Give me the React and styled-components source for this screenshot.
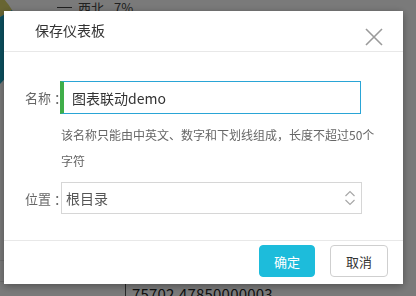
import React from 'react'
import styled, { createGlobalStyle } from 'styled-components'

const Global = createGlobalStyle`
  html, body {
    margin: 0;
    padding: 0;
    background: #fff;
    font-family: "Noto Sans CJK SC", "Noto Sans", sans-serif;
  }
  #root {
    width: 416px;
    height: 296px;
    overflow: hidden;
  }
`

const Dashboard = styled.div`
  position: relative;
  width: 416px;
  height: 296px;
  display: flex;
  flex-direction: column;
  justify-content: space-between;
  overflow: hidden;
`

const Pie = styled.svg`
  position: absolute;
  left: 0;
  top: 0;
`

const Legend = styled.div`
  display: flex;
  align-items: center;
  gap: 6px;
  padding-left: 57px;
  height: 20px;
  margin-top: -3px;
  font-size: 13px;
  color: #444;
`

const LegendLine = styled.span`
  width: 15px;
  height: 1px;
  background: #444;
`

const Rows = styled.div`
  display: flex;
  flex-direction: column;
`

const RowLine = styled.div`
  height: ${p => p.$h}px;
  border-bottom: 1px solid #e6e6e6;
  margin-right: 300px;
`

const Cell = styled.div`
  margin-left: 125px;
  border-left: 1px solid #555;
  padding-left: 6px;
  height: 14px;
  font-size: 15px;
  line-height: 24px;
  color: #222;
  letter-spacing: 0.2px;
`

const Mask = styled.div`
  position: fixed;
  inset: 0;
  background: rgba(0, 0, 0, 0.52);
`

const Dialog = styled.div`
  position: fixed;
  left: 4px;
  top: 11px;
  width: 399px;
  height: 273px;
  background: #fff;
  box-shadow: 0 2px 8px rgba(0, 0, 0, 0.35);
  display: flex;
  flex-direction: column;
`

const Header = styled.div`
  height: 40px;
  display: flex;
  align-items: center;
  padding: 0 20px 0 0;
  border-bottom: 1px solid #e8e8e8;
`

const Title = styled.div`
  flex: 1;
  padding-left: 31px;
  font-size: 14px;
  color: #333;
  margin-top: -2px;
`

const Close = styled.svg`
  margin-top: 12px;
`

const Body = styled.div`
  flex: 1;
  padding: 29px 0 0 0;
`

const Field = styled.div`
  display: flex;
  align-items: center;
`

const Label = styled.div`
  flex-shrink: 0;
  width: 56px;
  box-sizing: border-box;
  padding-left: 21px;
  white-space: nowrap;
  font-size: 13px;
  color: #666;
`

const Colon = styled.span`
  margin-left: 3px;
`

const Input = styled.div`
  box-sizing: border-box;
  width: 301px;
  height: 33px;
  border: 1px solid #2aa5d6;
  border-left: 4px solid #3fae49;
  display: flex;
  align-items: center;
  padding-left: 8px;
  font-size: 14px;
  color: #333;
`

const Hint = styled.div`
  margin: 8px 0 8px 57px;
  width: 320px;
  font-size: 12px;
  line-height: 26px;
  color: #666;
`

const Select = styled.div`
  box-sizing: border-box;
  width: 301px;
  height: 32px;
  margin-left: 1px;
  border: 1px solid #d6d6d6;
  display: flex;
  align-items: center;
  justify-content: space-between;
  padding: 0 5px 0 4px;
  font-size: 14px;
  color: #555;
`

const Footer = styled.div`
  height: 39px;
  border-top: 1px solid #e8e8e8;
  display: flex;
  justify-content: flex-end;
  align-items: flex-start;
  gap: 15px;
  padding: 4px 15px 0 0;
`

const Button = styled.button`
  box-sizing: border-box;
  width: ${p => p.$w}px;
  height: 32px;
  border-radius: 4px;
  border: 1px solid ${p => (p.$primary ? '#1dbcdb' : '#cfcfcf')};
  background: ${p => (p.$primary ? '#1dbcdb' : '#fff')};
  color: ${p => (p.$primary ? '#fff' : '#333')};
  font-family: inherit;
  font-size: 13px;
  padding: 0;
`

const App = () => {
  return (
    <>
      <Global />
      <Dashboard>
        <Pie width="40" height="120" viewBox="0 0 40 120">
          <path d="M-40 40 L-40 -20 A60 60 0 0 1 12 10 Z" fill="#d9d36a" />
          <path d="M-40 40 L12 10 A60 60 0 0 1 -5 88 Z" fill="#1aa9c8" />
        </Pie>
        <Legend>
          <LegendLine />
          <span>西北</span>
          <span style={{ marginLeft: 4 }}>7%</span>
        </Legend>
        <Rows>
          <RowLine $h={6} />
          <RowLine $h={20} />
          <Cell>75702.47850000003</Cell>
        </Rows>
      </Dashboard>
      <Mask />
      <Dialog>
        <Header>
          <Title>保存仪表板</Title>
          <Close width="18" height="18" viewBox="0 0 18 18">
            <path d="M1 1 L17 17 M17 1 L1 17" stroke="#9a9a9a" strokeWidth="1.6" fill="none" />
          </Close>
        </Header>
        <Body>
          <Field>
            <Label>名称<Colon>：</Colon></Label>
            <Input>图表联动demo</Input>
          </Field>
          <Hint>该名称只能由中英文、数字和下划线组成，长度不超过50个字符</Hint>
          <Field>
            <Label>位置<Colon>：</Colon></Label>
            <Select>
              <span>根目录</span>
              <svg width="12" height="16" viewBox="0 0 12 16">
                <path d="M1.5 6 L6 1.5 L10.5 6 M1.5 10 L6 14.5 L10.5 10" stroke="#a8a8a8" strokeWidth="1.2" fill="none" />
              </svg>
            </Select>
          </Field>
        </Body>
        <Footer>
          <Button $primary $w={56}>确定</Button>
          <Button $w={58}>取消</Button>
        </Footer>
      </Dialog>
    </>
  )
}

export default App
